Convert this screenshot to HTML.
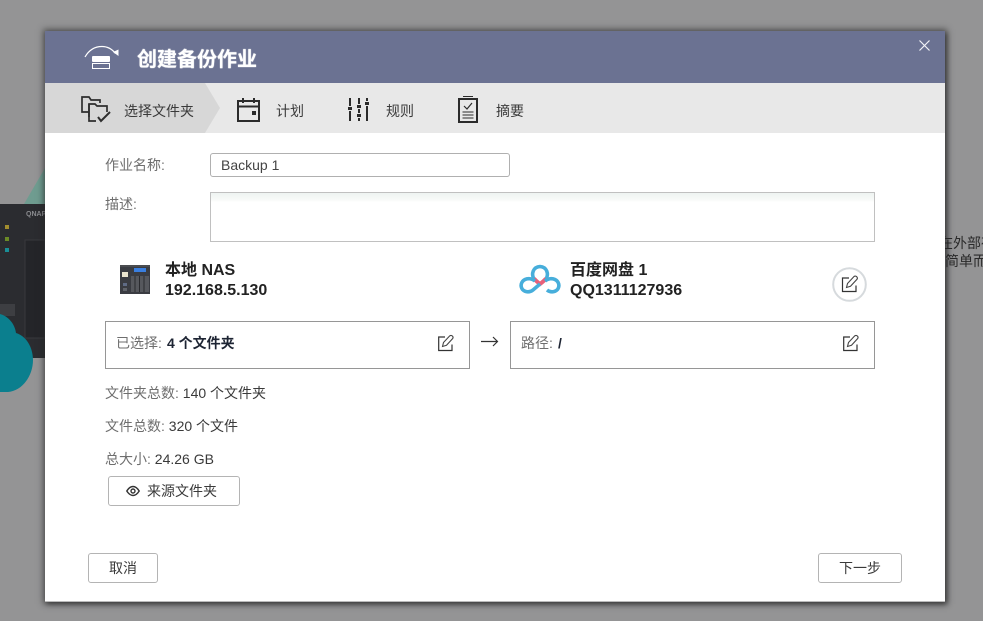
<!DOCTYPE html>
<html lang="zh">
<head>
<meta charset="utf-8">
<title>创建备份作业</title>
<style>
html,body{margin:0;padding:0}
body{width:983px;height:621px;position:relative;overflow:hidden;background:#949495;font-family:"Liberation Sans","Noto Sans CJK SC",sans-serif;font-size:14px;color:#3a3a3a}
.a{position:absolute;white-space:nowrap;line-height:18px}
.box{position:absolute;box-sizing:border-box;background:#fff}
.g{color:#6e6e6e}
.btn{position:absolute;box-sizing:border-box;background:#fff;border:1px solid #b4b4b4;border-radius:3px;text-align:center;color:#3a3a3a;font-size:14px}
svg{position:absolute;overflow:visible}
</style>
</head>
<body>
<!-- background -->
<svg style="left:0;top:0" width="45" height="400">
<polygon points="45,168 45,204 24,204" fill="#6f9c90"/>
<rect x="0" y="204" width="45" height="154" fill="#2b2c30"/>
<rect x="25" y="240" width="20" height="98" fill="#242529" stroke="#38393d"/>
<rect x="5" y="225" width="4" height="4" fill="#a18d2e"/>
<rect x="5" y="237" width="4" height="4" fill="#6b8a26"/>
<rect x="5" y="248" width="4" height="4" fill="#1a8e96"/>
<rect x="0" y="304" width="15" height="12" fill="#3d3e42"/>
<path d="M0 314C8 316 15 324 16 333C26 336 33 347 33 360C33 376 22 391 8 392L0 392Z" fill="#0b7f8e"/>
</svg>
<div class="a" style="left:26px;top:211px;font-size:7px;line-height:8px;color:#8a8b8f;font-weight:bold;width:19px;overflow:hidden">QNAP</div>
<div class="a" style="left:945px;top:234px;color:#2a2a2a;width:38px;overflow:hidden"><span style="margin-left:-6px">在外部存</span></div>
<div class="a" style="left:945px;top:252px;color:#2a2a2a;width:38px;overflow:hidden">简单而</div>

<!-- dialog -->
<div class="box" style="left:45px;top:31px;width:900px;height:571px;box-shadow:0 0 6px 2px rgba(40,40,40,.55),2px 2px 5px rgba(30,30,30,.6);border-bottom:1px solid #bbb"></div>
<div class="box" style="left:45px;top:31px;width:900px;height:52px;background:#6b7292"></div>
<svg style="left:84px;top:45px" width="36" height="26" fill="none">
<path d="M1 12C5 5 11 1.500 18 1.500C24 1.500 28 4 31.500 8.500" stroke="#fff" stroke-width="1.200"/>
<path d="M29 7L34.500 11L34.500 4.500Z" fill="#fff"/>
<rect x="8" y="11" width="18" height="6" rx="1" fill="#fff"/>
<rect x="8.500" y="18.500" width="17" height="5" fill="none" stroke="#fff"/>
</svg>
<div class="a" style="left:137px;top:46px;font-size:20px;line-height:28px;font-weight:bold;color:#fff;text-shadow:0 0 1px #fff">创建备份作业</div>
<svg style="left:919px;top:40px" width="11" height="11"><path d="M.5.5L10.500 10.500M10.500.5L.5 10.500" stroke="#f2f3f7" stroke-width="1.200"/></svg>

<!-- tabs -->
<div class="box" style="left:45px;top:83px;width:900px;height:50px;background:#e8e8e8"></div>
<svg style="left:45px;top:83px" width="176" height="50"><polygon points="0,0 160,0 175,25 160,50 0,50" fill="#d7d7d7"/></svg>
<svg style="left:80px;top:95px" width="32" height="28" fill="none" stroke="#2e2e2e" stroke-width="1.700">
<path d="M9 17H2V2H9L11 5H20V8"/>
<path d="M9 22V9H15L17 11H27V17"/>
<path d="M9 9V26H16"/>
<path d="M18 22L21 26L30 17" stroke-width="2"/>
</svg>
<div class="a" style="left:124px;top:102px">选择文件夹</div>
<svg style="left:237px;top:98px" width="24" height="24" fill="none" stroke="#2b2b2b" stroke-width="2">
<rect x="1" y="3" width="21" height="20"/>
<path d="M1 8.500H22M6 0V5M17 0V5"/>
<rect x="15" y="13" width="4" height="4" fill="#2b2b2b" stroke="none"/>
</svg>
<div class="a" style="left:276px;top:102px">计划</div>
<svg style="left:348px;top:98px" width="22" height="24" fill="none" stroke="#2b2b2b" stroke-width="2">
<path d="M2 0V8M2 13V23M11 0V6M11 11V15M11 20V23M19 0V3M19 8V23"/>
<path d="M0 10.500H4M9 8.500H13M9 17.500H13M17 5.500H21" stroke-width="3"/>
</svg>
<div class="a" style="left:386px;top:102px">规则</div>
<svg style="left:458px;top:96px" width="20" height="27" fill="none" stroke="#2b2b2b">
<path d="M5 .5H15" stroke-width="1"/>
<rect x="1" y="3" width="18" height="23" stroke-width="2"/>
<path d="M6 10L9 13L14 7" stroke-width="1.200"/>
<path d="M4.500 16H15.500M4.500 19H15.500M4.500 22H15.500" stroke-width="1"/>
</svg>
<div class="a" style="left:496px;top:102px">摘要</div>

<!-- form -->
<div class="a g" style="left:105px;top:156px">作业名称:</div>
<div class="box" style="left:210px;top:153px;width:300px;height:24px;border:1px solid #b0b0b0;border-radius:3px;padding-left:10px;line-height:22px;font-size:14px;color:#444">Backup 1</div>
<div class="a g" style="left:105px;top:195px">描述:</div>
<div class="box" style="left:210px;top:192px;width:665px;height:50px;border:1px solid #c0c0c0;background:linear-gradient(#eef3f1 0,#f8faf9 7px,#fff 9px)"></div>

<!-- NAS icon -->
<svg style="left:120px;top:265px" width="30" height="30">
<rect width="30" height="29" fill="#3a3c42"/>
<rect x="0" y="0" width="30" height="2" fill="#4a4c50"/>
<rect x="2" y="7" width="6" height="5" fill="#e9e4cf"/>
<rect x="14" y="3" width="12" height="4" fill="#3a7fe0"/>
<path d="M11 11H29V27H11Z" fill="#56585d"/>
<path d="M15 11V27M19.500 11V27M24 11V27" stroke="#2a2b2f"/>
<rect x="3" y="18" width="4" height="3" fill="#5f6b85"/>
<rect x="3" y="23" width="4" height="3" fill="#60636a"/>
</svg>
<div class="a" style="left:165px;top:261px;font-size:16px;line-height:20px;font-weight:bold;color:#222">本地 NAS</div>
<div class="a" style="left:165px;top:281px;font-size:16px;line-height:20px;font-weight:bold;color:#222">192.168.5.130</div>

<!-- Baidu icon -->
<svg style="left:519px;top:264px" width="42" height="32" fill="none">
<path d="M15 15C12 10 14 3 21 2.500C28 3 30 10 27 15" stroke="#47aedb" stroke-width="3.600"/>
<path d="M15 14.500C17 17 19 18.500 21 20C23 18.500 25 17 27 14.500" stroke="#e8607a" stroke-width="4"/>
<path d="M16 17C13 14.500 9 14 6 15.500C2 17.500 1 22 3.500 25.500C6.500 28.500 11 28.500 14 26L21 20" stroke="#47aedb" stroke-width="3.600"/>
<path d="M26 17C29 14.500 33 14 36 15.500C40 17.500 41 22 38.500 25.500C35.500 28.500 31 28.500 28 26" stroke="#47aedb" stroke-width="3.600"/>
</svg>
<div class="a" style="left:570px;top:261px;font-size:16px;line-height:20px;font-weight:bold;color:#222">百度网盘 1</div>
<div class="a" style="left:570px;top:281px;font-size:16px;line-height:20px;font-weight:bold;color:#222">QQ1311127936</div>

<!-- round edit -->
<svg style="left:832px;top:267px" width="35" height="35" fill="none">
<circle cx="17.500" cy="17.500" r="16.300" stroke="#d6dadd" stroke-width="2"/>
<path d="M17 11H10.500V24.500H24V18.500" stroke="#333" stroke-width="1.200"/>
<path d="M14.500 20.500L15.500 16.500L22 9.500C23 8.800 24 9 24.800 9.800C25.500 10.600 25.500 11.600 25 12.300L18.500 19.300Z" stroke="#444" stroke-width="1.100"/>
</svg>

<!-- source/dest -->
<div class="box" style="left:105px;top:321px;width:365px;height:48px;border:1px solid #969696"></div>
<div class="a g" style="left:116px;top:334px">已选择:</div>
<div class="a" style="left:167px;top:334px;font-weight:bold;color:#1d2433">4 个文件夹</div>
<svg style="left:438px;top:335px" width="17" height="17" fill="none">
<path d="M7 2H.7V15.500H14V9.500" stroke="#333" stroke-width="1.200"/>
<path d="M4.500 11.500L5.500 7.500L11.800 .8C12.700 .2 13.700 .3 14.500 1.100C15.200 1.900 15.200 2.800 14.700 3.500L8.500 10.300Z" stroke="#444" stroke-width="1.100"/>
</svg>
<svg style="left:481px;top:336px" width="18" height="11" fill="none" stroke="#333" stroke-width="1.200"><path d="M0 5.500H16.500M12 1L16.500 5.500L12 10"/></svg>
<div class="box" style="left:510px;top:321px;width:365px;height:48px;border:1px solid #969696"></div>
<div class="a g" style="left:521px;top:334px">路径:</div>
<div class="a" style="left:558px;top:334px;font-weight:bold;color:#1d2433">/</div>
<svg style="left:843px;top:335px" width="17" height="17" fill="none">
<path d="M7 2H.7V15.500H14V9.500" stroke="#333" stroke-width="1.200"/>
<path d="M4.500 11.500L5.500 7.500L11.800 .8C12.700 .2 13.700 .3 14.500 1.100C15.200 1.900 15.200 2.800 14.700 3.500L8.500 10.300Z" stroke="#444" stroke-width="1.100"/>
</svg>

<!-- stats -->
<div class="a" style="left:105px;top:384px"><span class="g">文件夹总数:</span> 140 个文件夹</div>
<div class="a" style="left:105px;top:417px"><span class="g">文件总数:</span> 320 个文件</div>
<div class="a" style="left:105px;top:450px"><span class="g">总大小:</span> 24.26 GB</div>

<div class="btn" style="left:108px;top:476px;width:132px;height:30px"></div>
<svg style="left:126px;top:485px" width="14" height="12" fill="none" stroke="#333" stroke-width="1.400">
<path d="M.8 6C3 2.500 5 1.500 7 1.500C9 1.500 11 2.500 13.200 6C11 9.500 9 10.500 7 10.500C5 10.500 3 9.500 .8 6Z"/>
<circle cx="7" cy="6" r="2"/>
</svg>
<div class="a" style="left:147px;top:482px">来源文件夹</div>

<div class="btn" style="left:88px;top:553px;width:70px;height:30px;line-height:28px">取消</div>
<div class="btn" style="left:818px;top:553px;width:84px;height:30px;line-height:28px">下一步</div>
</body>
</html>
